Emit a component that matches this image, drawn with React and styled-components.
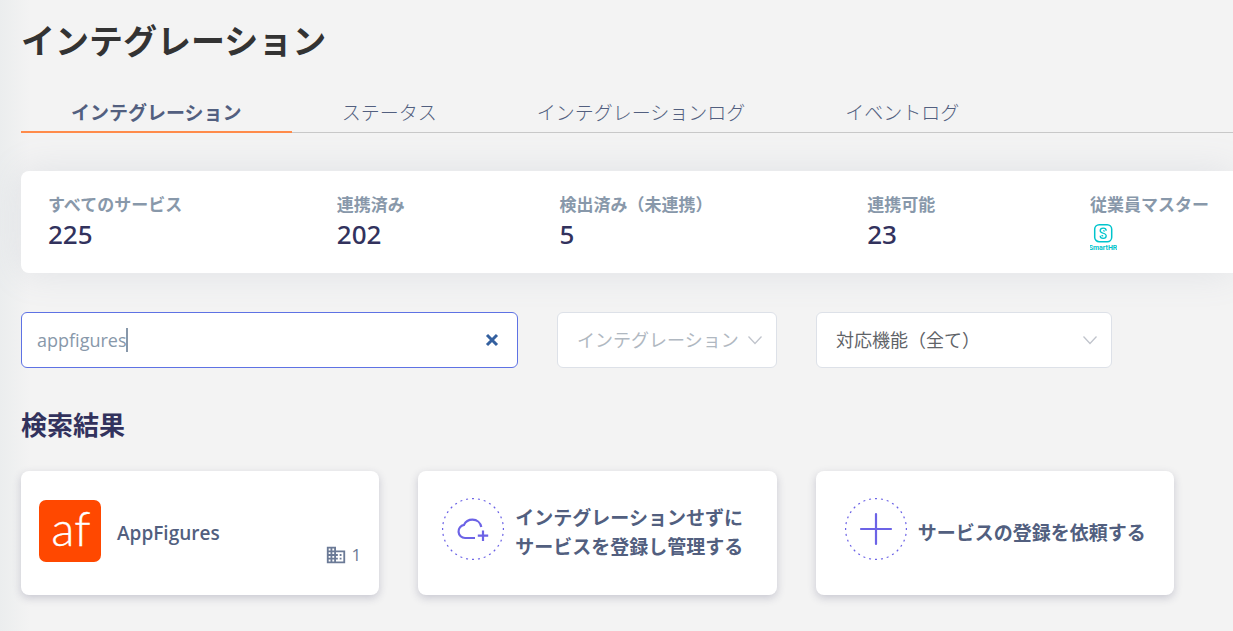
import React, { useState } from "react";
import styled, { createGlobalStyle } from "styled-components";
import { MdBusiness } from "react-icons/md";

const GlobalStyle = createGlobalStyle`
  * {
    box-sizing: border-box;
  }

  body {
    margin: 0;
    background: #f3f3f3;
    color: #525f7f;
    font-family: "Open Sans", "Noto Sans CJK JP", sans-serif;
  }

  button,
  input,
  select {
    font-family: inherit;
  }
`;

const Page = styled.main`
  min-height: 100vh;
  padding: 18px 0 36px 21px;
  overflow: hidden;
  background: linear-gradient(to right, #ebedee, #f3f3f3 30px);
`;

const Title = styled.h1`
  margin: 0;
  color: #333333;
  font-size: 34px;
  font-weight: 700;
  line-height: 46px;
`;

const Tabs = styled.nav`
  display: flex;
  margin-top: 29px;
  box-shadow: inset 0 -1px 0 #c8c8c8;
`;

const Tab = styled.a`
  padding: 2px 50px 0;
  border-bottom: 2px solid ${props => (props.$active ? "#ff8b4a" : "transparent")};
  color: #525f7f;
  font-size: 19px;
  font-weight: ${props => (props.$active ? 700 : 300)};
  line-height: 36px;
  text-decoration: none;
  white-space: nowrap;
`;

const Stats = styled.dl`
  display: flex;
  justify-content: space-between;
  margin: 38px 0 0;
  padding: 20px 24px 20px 27px;
  border-radius: 8px 0 0 8px;
  background: white;
  box-shadow: 0 0 36px rgba(130, 145, 165, 0.16);
`;

const Stat = styled.div`
  dt {
    color: #8898aa;
    font-size: 17px;
    font-weight: 700;
    line-height: 28px;
    white-space: nowrap;
  }

  dd {
    display: flow-root;
    height: 34px;
    margin: 0;
    color: #32325d;
    font-family: "Noto Sans", sans-serif;
    font-size: 26px;
    font-weight: 500;
    line-height: 30px;
  }

  svg {
    display: block;
    margin-top: 4px;
  }
`;

const Content = styled.div`
  padding-right: 59px;
`;

const Filters = styled.form`
  display: flex;
  gap: 39px;
  margin-top: 39px;
`;

const SearchBox = styled.div`
  display: flex;
  flex: 0 1 497px;
  align-items: center;
  height: 56px;
  padding: 0 15px;
  border: 1px solid #5e72e4;
  border-radius: 6px;
  background: white;
`;

const SearchInput = styled.input`
  min-width: 2px;
  padding: 0;
  border: 0;
  outline: 0;
  background: none;
  color: #8898aa;
  caret-color: transparent;
  font-size: 18px;
  line-height: 26px;
  field-sizing: content;
`;

const Caret = styled.span`
  flex: none;
  width: 2px;
  height: 24px;
  background: #8898aa;
`;

const ClearButton = styled.button`
  display: flex;
  margin-left: auto;
  padding: 3px;
  border: 0;
  background: none;
  cursor: pointer;
`;

const SelectBox = styled.div`
  display: grid;
  flex: 0 1 ${props => props.$width};
  align-items: center;

  > * {
    grid-area: 1 / 1;
  }

  svg {
    justify-self: end;
    margin-right: 14px;
    pointer-events: none;
  }
`;

const Select = styled.select`
  width: 100%;
  height: 56px;
  padding: 0 36px 0 19px;
  appearance: none;
  border: 1px solid #dde1e8;
  border-radius: 6px;
  background: white;
  color: ${props => (props.$muted ? "#b0b8c1" : "#5f6368")};
  font-size: 18px;
`;

const SectionTitle = styled.h2`
  margin: 37px 0 26px;
  color: #32325d;
  font-size: 26px;
  font-weight: 700;
  line-height: 40px;
`;

const Cards = styled.div`
  display: grid;
  grid-template-columns: repeat(3, 1fr);
  gap: 39px;
`;

const Card = styled.button`
  display: flex;
  align-items: center;
  gap: ${props => props.$gap};
  min-height: 124px;
  padding: 0 18px 0 ${props => props.$inset};
  border: 0;
  border-radius: 8px;
  background: white;
  box-shadow: 0 3px 8px rgba(50, 50, 93, 0.22);
  color: #525f7f;
  text-align: left;
  cursor: pointer;

  > svg {
    flex: none;
    margin-bottom: ${props => (props.$action ? "8px" : "4px")};
  }
`;

const CardName = styled.span`
  font-size: 19px;
  font-weight: ${props => (props.$latin ? 600 : 700)};
  line-height: 29px;
`;

const CompanyCount = styled.span`
  display: flex;
  align-items: center;
  align-self: flex-end;
  gap: 5px;
  margin: 0 0 28px auto;
  color: #6b7a96;
  font-size: 17px;
  line-height: 24px;
`;

const SmartHRLogo = () => (
  <svg width="27" height="28" viewBox="0 0 27 28" role="img" aria-label="SmartHR">
    <g fill="none" stroke="#00c4cc">
      <rect x="4.7" y="1.7" width="17" height="17" rx="4.5" strokeWidth="1.5" />
      <path
        d="M16.2 7.8c0-1.7-1.3-2.6-3-2.6s-3 1-3 2.6c0 3 6 1.9 6 4.9 0 1.6-1.3 2.6-3 2.6s-3-1-3-2.6M13.2 7.6c1 0 1.3.6 1.3 1M13.2 12.9c-1 0-1.3-.6-1.3-1"
        strokeWidth="1.3"
      />
    </g>
    <text
      x="13"
      y="27"
      fill="#00c4cc"
      fontFamily="Roboto, sans-serif"
      fontSize="7"
      fontWeight="700"
      textAnchor="middle"
    >
      SmartHR
    </text>
  </svg>
);

const AppFiguresLogo = () => (
  <svg width="62" height="62" viewBox="0 0 62 62" aria-hidden="true">
    <rect width="62" height="62" rx="7" fill="#ff4800" />
    <text
      x="32"
      y="46"
      fill="white"
      stroke="white"
      strokeWidth="0.3"
      fontFamily="Lato, sans-serif"
      fontSize="48"
      fontWeight="300"
      textAnchor="middle"
    >
      af
    </text>
  </svg>
);

const RoundIcon = ({ children }) => (
  <svg
    width="62"
    height="62"
    viewBox="0 0 62 62"
    fill="none"
    stroke="#6c63e6"
    strokeWidth="2.2"
    aria-hidden="true"
  >
    <circle
      cx="31"
      cy="31"
      r="30.4"
      pathLength="192"
      strokeWidth="1.2"
      strokeDasharray="2 4"
      strokeDashoffset="1"
    />
    {children}
  </svg>
);

const Chevron = () => (
  <svg width="16" height="10" viewBox="0 0 16 10" fill="none" stroke="#c0c4cc" strokeWidth="1.3">
    <path d="M1.5 1.5 8 8.5l6.5-7" />
  </svg>
);

const tabs = ["インテグレーション", "ステータス", "インテグレーションログ", "イベントログ"];

const stats = [
  { label: "すべてのサービス", value: "225" },
  { label: "連携済み", value: "202" },
  { label: "検出済み（未連携）", value: "5" },
  { label: "連携可能", value: "23" },
  { label: "従業員マスター", value: <SmartHRLogo /> }
];

const App = () => {
  const [query, setQuery] = useState("appfigures");

  return (
    <>
      <GlobalStyle />
      <Page lang="ja">
        <Title>インテグレーション</Title>
        <Tabs>
          {tabs.map((tab, index) => (
            <Tab key={tab} href="#" $active={index === 0}>
              {tab}
            </Tab>
          ))}
        </Tabs>
        <Stats>
          {stats.map(stat => (
            <Stat key={stat.label}>
              <dt>{stat.label}</dt>
              <dd>{stat.value}</dd>
            </Stat>
          ))}
        </Stats>
        <Content>
          <Filters>
            <SearchBox>
              <SearchInput
                type="text"
                aria-label="検索"
                value={query}
                onChange={event => setQuery(event.target.value)}
              />
              <Caret />
              <ClearButton type="button" aria-label="クリア" onClick={() => setQuery("")}>
                <svg width="14" height="14" viewBox="0 0 14 14" stroke="#34609f" strokeWidth="3">
                  <path d="m2 2 10 10M12 2 2 12" />
                </svg>
              </ClearButton>
            </SearchBox>
            <SelectBox $width="220px">
              <Select $muted aria-label="インテグレーション">
                <option>インテグレーション</option>
              </Select>
              <Chevron />
            </SelectBox>
            <SelectBox $width="296px">
              <Select aria-label="対応機能">
                <option>対応機能（全て）</option>
              </Select>
              <Chevron />
            </SelectBox>
          </Filters>
          <SectionTitle>検索結果</SectionTitle>
          <Cards>
            <Card $inset="18px" $gap="16px">
              <AppFiguresLogo />
              <CardName $latin>AppFigures</CardName>
              <CompanyCount>
                <MdBusiness size={22} />1
              </CompanyCount>
            </Card>
            <Card $action $inset="24px" $gap="11px">
              <RoundIcon>
                <path d="M33 40H23a6.6 6.6 0 0 1-1-13.1c1.4-3 4.8-5.2 8.5-5.2 4.5 0 8 3 8.8 7.3M41 32.5V43M35.8 37.7h10.4" />
              </RoundIcon>
              <CardName>
                インテグレーションせずに
                <br />
                サービスを登録し管理する
              </CardName>
            </Card>
            <Card $action $inset="29px" $gap="11px">
              <RoundIcon>
                <path d="M31 16v30M16 31h30" strokeLinecap="round" />
              </RoundIcon>
              <CardName>サービスの登録を依頼する</CardName>
            </Card>
          </Cards>
        </Content>
      </Page>
    </>
  );
};

export default App;
